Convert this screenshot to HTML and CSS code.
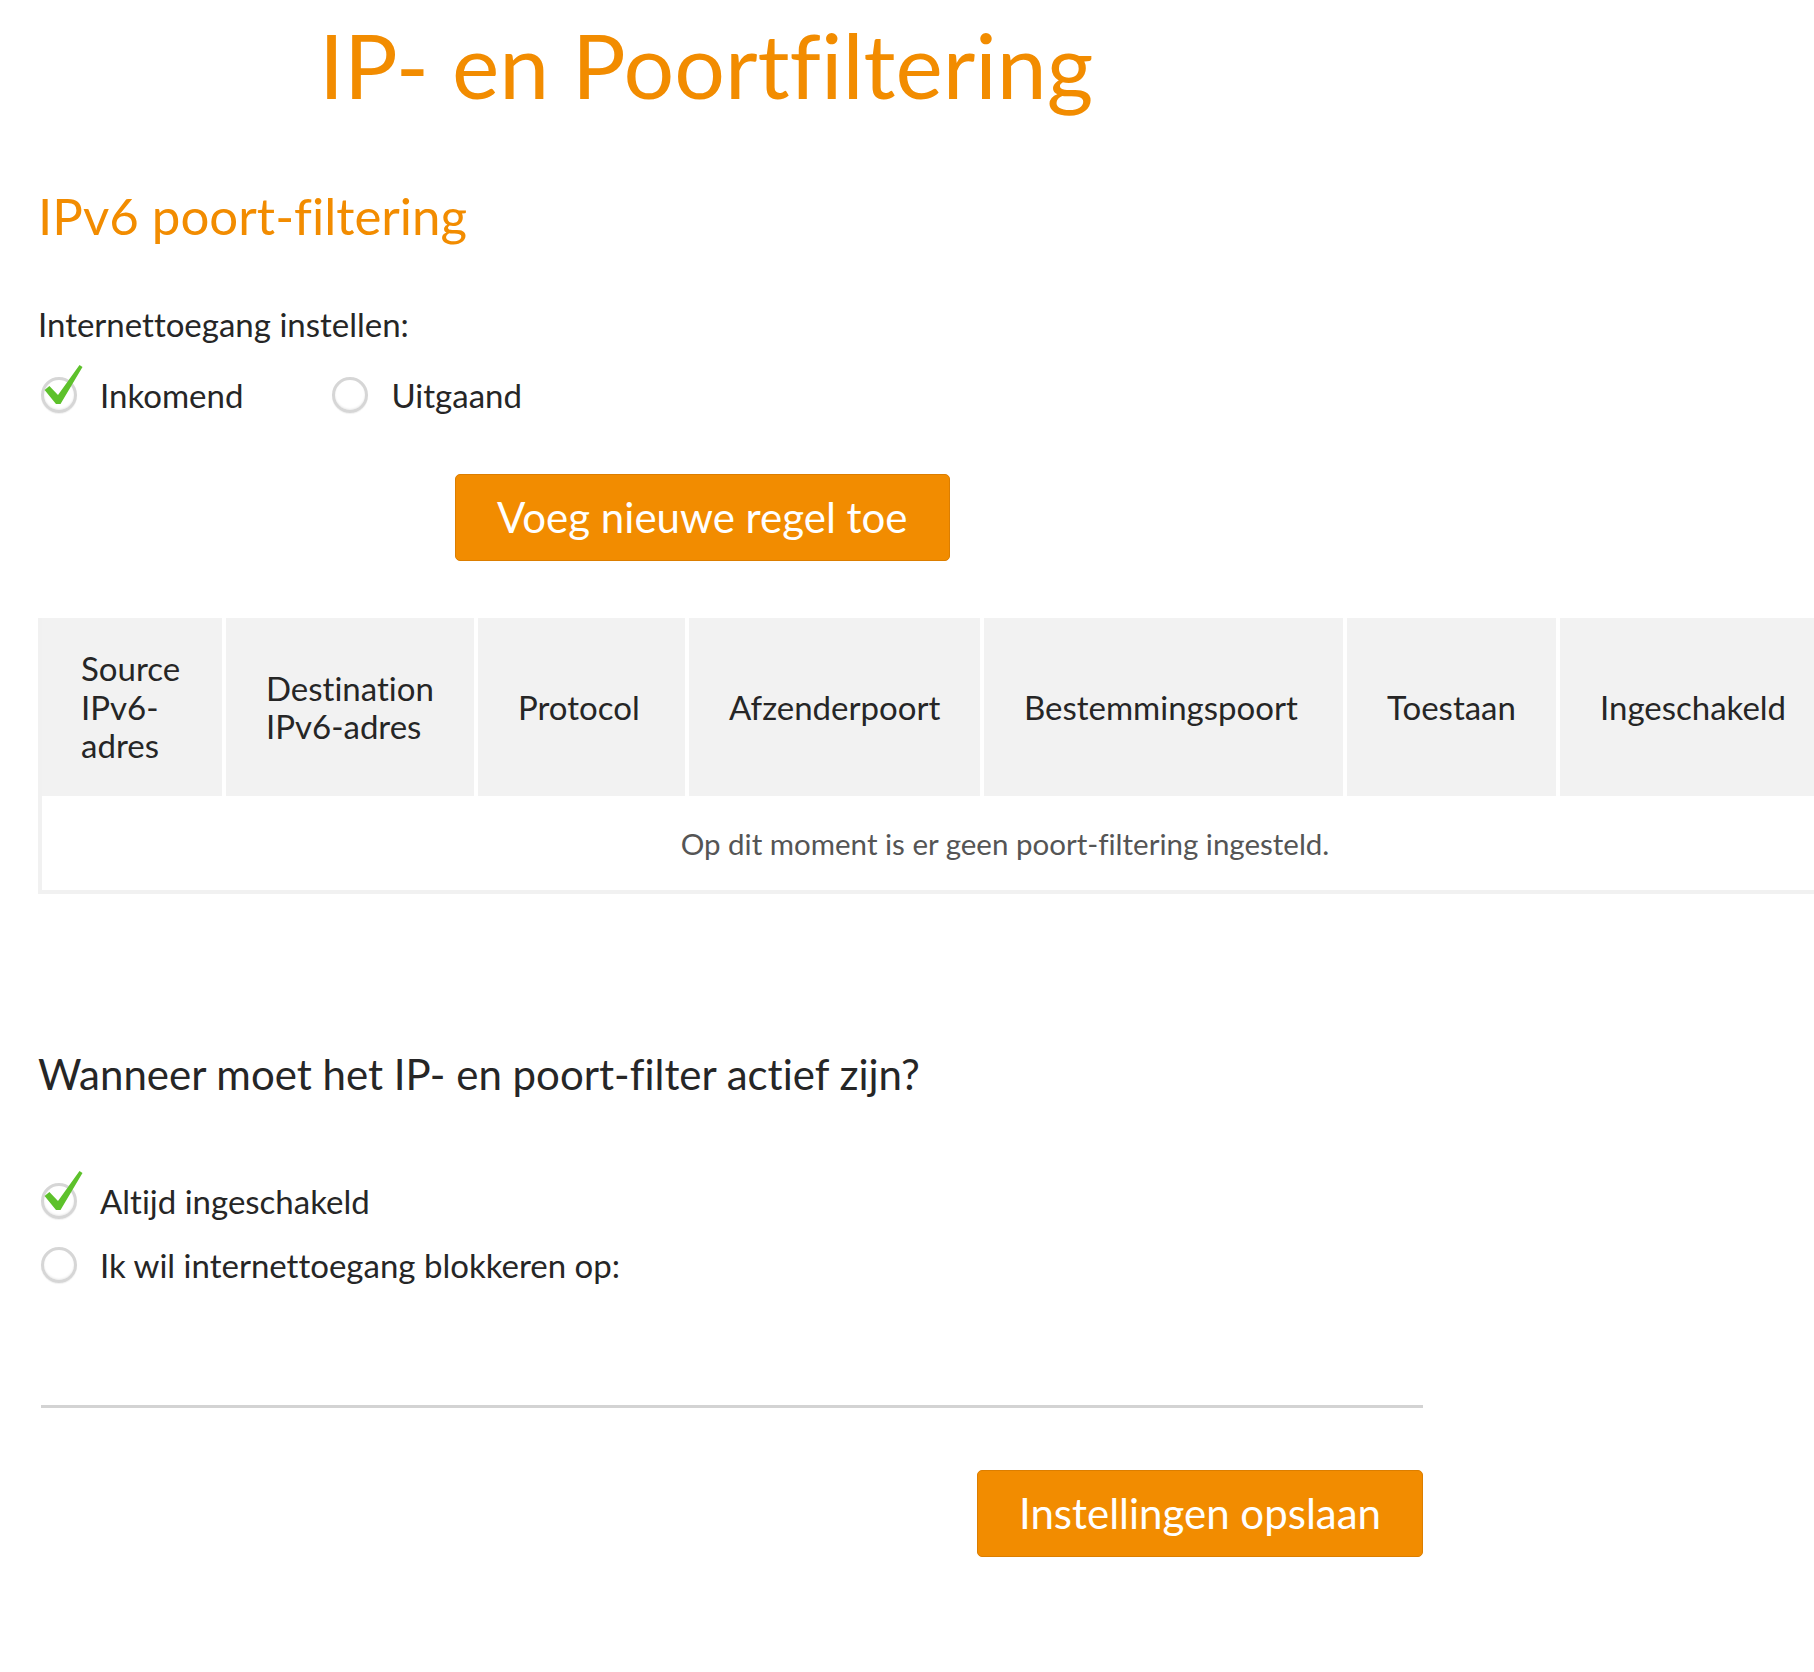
FILE: index.html
```html
<!DOCTYPE html>
<html lang="nl">
<head>
    <meta charset="UTF-8">
    <meta name="viewport" content="width=device-width, initial-scale=1.0">
    <title>IP- en Poortfiltering</title>
    <link rel="stylesheet" href="styles.css">
</head>
<body>
    <div class="page">
        <h1 class="title">IP- en Poortfiltering</h1>

        <h2 class="section-title">IPv6 poort-filtering</h2>

        <div class="field-label">Internettoegang instellen:</div>
        <div class="radio-group">
            <label class="radio checked">
                <span class="radio-icon">
                    <svg class="tick" viewBox="0 0 44 44"><polygon points="3.6,25.9 8.4,22.1 17,31 38.5,1 41.5,3 19.5,40 15,40"/></svg>
                </span>
                <span class="radio-text">Inkomend</span>
            </label>
            <label class="radio">
                <span class="radio-icon"></span>
                <span class="radio-text">Uitgaand</span>
            </label>
        </div>

        <button class="btn btn-add" type="button">Voeg nieuwe regel toe</button>

        <table class="rules">
            <thead>
                <tr>
                    <th class="col-src">Source IPv6-adres</th>
                    <th class="col-dst">Destination IPv6-adres</th>
                    <th class="col-proto">Protocol</th>
                    <th class="col-sport">Afzenderpoort</th>
                    <th class="col-dport">Bestemmingspoort</th>
                    <th class="col-allow">Toestaan</th>
                    <th class="col-on">Ingeschakeld</th>
                </tr>
            </thead>
            <tbody>
                <tr>
                    <td class="empty" colspan="7">Op dit moment is er geen poort-filtering ingesteld.</td>
                </tr>
            </tbody>
        </table>

        <h3 class="question">Wanneer moet het IP- en poort-filter actief zijn?</h3>

        <div class="radio-list">
            <label class="radio checked">
                <span class="radio-icon">
                    <svg class="tick" viewBox="0 0 44 44"><polygon points="3.6,25.9 8.4,22.1 17,31 38.5,1 41.5,3 19.5,40 15,40"/></svg>
                </span>
                <span class="radio-text">Altijd ingeschakeld</span>
            </label>
            <label class="radio">
                <span class="radio-icon"></span>
                <span class="radio-text">Ik wil internettoegang blokkeren op:</span>
            </label>
        </div>

        <div class="form-footer">
            <hr class="divider">
            <div class="actions">
                <button class="btn btn-save" type="button">Instellingen opslaan</button>
            </div>
        </div>
    </div>
</body>
</html>
```

FILE: styles.css
```css
body {
    margin: 0;
    font-family: Lato, "Liberation Sans", sans-serif;
    font-variant-ligatures: none;
    color: #262626;
    background-color: #fff;
    overflow-x: hidden;
}

.page {
    padding-left: 38px;
}

.title {
    margin: 20px 0 0 281px;
    font-size: 89.5px;
    line-height: 90px;
    font-weight: 400;
    color: #f28c00;
}

.section-title {
    margin: 80px 0 0;
    font-size: 51px;
    line-height: 51px;
    font-weight: 400;
    color: #f28c00;
}

.field-label {
    margin-top: 63px;
    font-size: 33px;
    line-height: 40px;
}

.radio-group {
    display: flex;
    gap: 86px;
    margin-top: 33px;
}

.radio {
    display: flex;
    align-items: center;
    gap: 23px;
    font-size: 33px;
    line-height: 36px;
    cursor: pointer;
}

.radio-icon {
    position: relative;
    width: 36px;
    height: 36px;
    margin-left: 3px;
    box-sizing: border-box;
    border: 3px solid #d6d6d6;
    border-radius: 50%;
    box-shadow: inset 0 -1px 2px rgba(0, 0, 0, 0.08), 0 1px 1px rgba(0, 0, 0, 0.06);
}

.radio-icon .tick {
    position: absolute;
    left: -3px;
    top: -16px;
    width: 44px;
    height: 44px;
    fill: #5dc12b;
}

.btn {
    display: block;
    height: 87px;
    padding: 0 41px;
    font-family: inherit;
    font-variant-ligatures: none;
    font-size: 42px;
    line-height: 85px;
    color: #fff;
    background-color: #f28c00;
    border: 1px solid #dc7e00;
    border-radius: 5px;
    cursor: pointer;
}

.btn-add {
    margin: 61px 0 0 417px;
}

.rules {
    margin-top: 57px;
    width: 1930px;
    table-layout: fixed;
    border-collapse: separate;
    border-spacing: 0;
    border-left: 4px solid #f1f1f1;
    border-bottom: 4px solid #f1f1f1;
    box-sizing: border-box;
}

.rules th {
    box-sizing: border-box;
    height: 178px;
    padding: 0 36px 0 40px;
    font-size: 33px;
    line-height: 38.5px;
    font-weight: 400;
    text-align: left;
    vertical-align: middle;
    background-color: #f2f2f2;
    border-left: 4px solid #fff;
}

.rules th:first-child {
    border-left: 0;
    padding-left: 39px;
}

.col-src { width: 180px; }
.col-dst { width: 252px; }
.col-proto { width: 211px; }
.col-sport { width: 295px; }
.col-dport { width: 363px; }
.col-allow { width: 213px; }
.col-on { width: 412px; }

.rules .empty {
    height: 94px;
    padding: 0;
    font-size: 29.5px;
    color: #555;
    text-align: center;
    vertical-align: middle;
}

.question {
    margin: 156px 0 0;
    font-size: 42px;
    line-height: 48px;
    font-weight: 400;
}

.radio-list {
    display: flex;
    flex-direction: column;
    gap: 28px;
    margin-top: 85px;
}

.form-footer {
    width: 1385px;
}

.divider {
    margin: 122px 0 0 3px;
    height: 3px;
    border: 0;
    background-color: #d3d3d3;
}

.actions {
    display: flex;
    justify-content: flex-end;
    margin-top: 62px;
}
```
